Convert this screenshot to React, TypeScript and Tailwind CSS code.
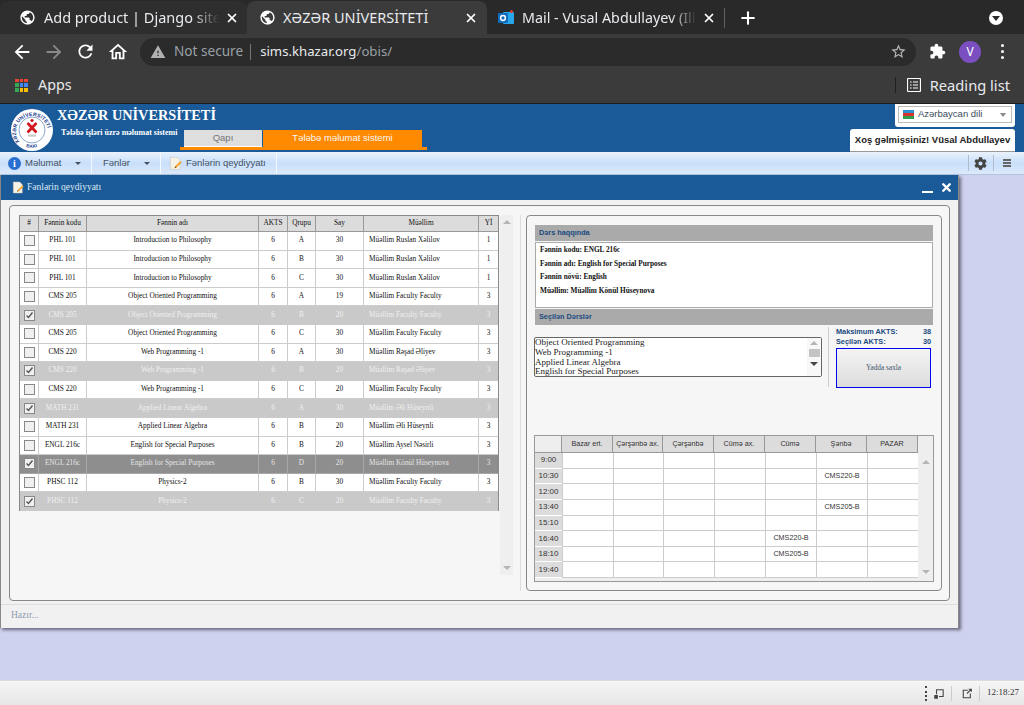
import { FaCog } from "react-icons/fa";
import { X, Plus } from "lucide-react";

const sans = "font-['Liberation_Sans',Arial,sans-serif]";
const serif = "font-['Liberation_Serif','Times_New_Roman',serif]";

type Course = [string, string, string, string, string, string, string, number];

const courses: Course[] = [
  ["PHL 101", "Introduction to Philosophy", "6", "A", "30", "Müəllim Ruslan Xəlilov", "1", 0],
  ["PHL 101", "Introduction to Philosophy", "6", "B", "30", "Müəllim Ruslan Xəlilov", "1", 0],
  ["PHL 101", "Introduction to Philosophy", "6", "C", "30", "Müəllim Ruslan Xəlilov", "1", 0],
  ["CMS 205", "Object Oriented Programming", "6", "A", "19", "Müəllim Faculty Faculty", "3", 0],
  ["CMS 205", "Object Oriented Programming", "6", "B", "20", "Müəllim Faculty Faculty", "3", 1],
  ["CMS 205", "Object Oriented Programming", "6", "C", "30", "Müəllim Faculty Faculty", "3", 0],
  ["CMS 220", "Web Programming -1", "6", "A", "30", "Müəllim Rəşad Əliyev", "3", 0],
  ["CMS 220", "Web Programming -1", "6", "B", "20", "Müəllim Rəşad Əliyev", "3", 1],
  ["CMS 220", "Web Programming -1", "6", "C", "20", "Müəllim Faculty Faculty", "3", 0],
  ["MATH 231", "Applied Linear Algebra", "6", "A", "30", "Müəllim Əli Hüseynli", "3", 1],
  ["MATH 231", "Applied Linear Algebra", "6", "B", "20", "Müəllim Əli Hüseynli", "3", 0],
  ["ENGL 216c", "English for Special Purposes", "6", "B", "20", "Müəllim Aysel Nəsirli", "3", 0],
  ["ENGL 216c", "English for Special Purposes", "6", "D", "20", "Müəllim Könül Hüseynova", "3", 2],
  ["PHSC 112", "Physics-2", "6", "B", "30", "Müəllim Faculty Faculty", "3", 0],
  ["PHSC 112", "Physics-2", "6", "C", "20", "Müəllim Faculty Faculty", "3", 1],
];

const days = ["Bazar ert.", "Çərşənbə ax.", "Çərşənbə", "Cümə ax.", "Cümə", "Şənbə", "PAZAR"];

const schedule: [string, Record<number, string>][] = [
  ["9:00", {}],
  ["10:30", { 5: "CMS220-B" }],
  ["12:00", {}],
  ["13:40", { 5: "CMS205-B" }],
  ["15:10", {}],
  ["16:40", { 4: "CMS220-B" }],
  ["18:10", { 4: "CMS205-B" }],
  ["19:40", {}],
];

const courseCols = "grid grid-cols-[19px_48px_172px_29px_28px_48px_115px_19px]";
const dayCols = "grid grid-cols-[27px_51px_50px_51px_51px_51px_51px_51px]";

function Md({ d, className }: { d: string; className: string }) {
  return (
    <svg viewBox="0 0 24 24" fill="currentColor" className={className}>
      <path d={d} />
    </svg>
  );
}

const globe =
  "M12 2C6.48 2 2 6.48 2 12s4.48 10 10 10 10-4.48 10-10S17.52 2 12 2zm-1 17.93c-3.95-.49-7-3.85-7-7.93 0-.62.08-1.21.21-1.79L9 15v1c0 1.1.9 2 2 2v1.93zm6.9-2.54c-.26-.81-1-1.39-1.9-1.39h-1v-3c0-.55-.45-1-1-1H8v-2h2c.55 0 1-.45 1-1V7h2c1.1 0 2-.9 2-2v-.41c2.93 1.19 5 4.06 5 7.41 0 2.08-.8 3.97-2.1 5.39z";

function Outlook() {
  return (
    <svg viewBox="0 0 16 16" className="w-4 h-4 shrink-0">
      <rect x="5" y="2" width="11" height="12" rx="1" fill="#28a8ea" />
      <rect x="0" y="3" width="10" height="10" rx="1" fill="#0f6cbd" />
      <circle cx="5" cy="8" r="2.4" fill="none" stroke="#fff" strokeWidth="1.5" />
      <circle cx="13.5" cy="1.5" r="1.5" fill="#e53935" />
    </svg>
  );
}

function AppsIcon() {
  const colors = [
    "bg-[#ea4335]", "bg-[#ea4335]", "bg-[#ea4335]",
    "bg-[#34a853]", "bg-[#4285f4]", "bg-[#4285f4]",
    "bg-[#34a853]", "bg-[#fbbc04]", "bg-[#fbbc04]",
  ];
  return (
    <div className="grid grid-cols-3 gap-[1px] w-[13px] h-[13px]">
      {colors.map((c, i) => (
        <div key={i} className={c} />
      ))}
    </div>
  );
}

function ChromeBar() {
  return (
    <div className="font-['Noto_Sans',sans-serif] text-[#e8eaed]">
      <div className="h-[34px] bg-[#292929] flex items-end">
        <div className="w-[247px] h-[33px] bg-[#2e2e2e] rounded-t-lg flex items-center pl-[20px] pr-[8px] shrink-0">
          <Md d={globe} className="w-[17px] h-[17px] shrink-0 text-white -ml-[1px]" />
          <span className="ml-[8px] text-[14.5px] w-[175px] whitespace-nowrap [mask-image:linear-gradient(to_right,black_85%,transparent)]">
            Add product | Django site
          </span>
          <X className="ml-auto w-[14px] h-[14px] text-white" strokeWidth={3} />
        </div>
        <div className="w-[240px] h-[33px] bg-[#3b3b3b] rounded-t-lg flex items-center pl-[12px] pr-[9px] shrink-0">
          <Md d={globe} className="w-[17px] h-[17px] shrink-0 text-white" />
          <span className="ml-[7px] text-[14.5px] whitespace-nowrap">XƏZƏR UNİVERSİTETİ</span>
          <X className="ml-auto w-[14px] h-[14px] text-white" strokeWidth={3} />
        </div>
        <div className="h-[33px] flex items-center pl-[11px] shrink-0">
          <Outlook />
          <span className="ml-[8px] text-[14.3px] w-[175px] shrink-0 whitespace-nowrap [mask-image:linear-gradient(to_right,black_85%,transparent)]">
            Mail - Vusal Abdullayev (Ill
          </span>
          <X className="ml-[5px] w-[14px] h-[14px] text-white shrink-0" strokeWidth={3} />
          <div className="ml-[8px] w-px h-[20px] bg-[#5f6368] shrink-0" />
          <Plus className="ml-[13px] w-[20px] h-[20px] text-white shrink-0" strokeWidth={2.5} />
        </div>
        <div className="flex-1 min-w-0 h-[33px] flex items-center justify-end pr-[21px]">
          <div className="w-[14px] h-[14px] rounded-full bg-white flex items-center justify-center">
            <div className="w-0 h-0 border-x-[4px] border-x-transparent border-t-[5px] border-t-[#292929] mt-[2px]" />
          </div>
        </div>
      </div>
      <div className="h-[35px] bg-[#3b3b3b] flex items-center">
        <Md d="M20 11H7.83l5.59-5.59L12 4l-8 8 8 8 1.41-1.41L7.83 13H20v-2z" className="ml-[11px] w-[22px] h-[22px] text-white" />
        <Md d="M12 4l-1.41 1.41L16.17 11H4v2h12.17l-5.58 5.59L12 20l8-8z" className="ml-[10px] w-[22px] h-[22px] text-[#8a8a8a]" />
        <Md d="M17.65 6.35C16.2 4.9 14.21 4 12 4c-4.42 0-7.99 3.58-7.99 8s3.57 8 7.99 8c3.73 0 6.84-2.55 7.73-6h-2.08c-.82 2.33-3.04 4-5.65 4-3.31 0-6-2.69-6-6s2.69-6 6-6c1.66 0 3.14.69 4.22 1.78L13 11h7V4l-2.35 2.35z" className="ml-[10px] w-[21px] h-[21px] text-white" />
        <Md d="M12 5.69l5 4.5V18h-2v-6H9v6H7v-7.81l5-4.5M12 3L2 12h3v8h6v-6h2v6h6v-8h3L12 3z" className="ml-[11px] w-[22px] h-[22px] text-white" />
        <div className="ml-[11px] w-[776px] h-[28px] rounded-full bg-[#2b2b2b] flex items-center pl-[10px]">
          <Md d="M1 21h22L12 2 1 21zm12-3h-2v-2h2v2zm0-4h-2v-4h2v4z" className="w-[16px] h-[16px] text-[#b0b0b0]" />
          <span className="ml-[8px] text-[13.6px] text-[#9aa0a6]">Not secure</span>
          <div className="ml-[7px] w-px h-[16px] bg-[#70757a]" />
          <span className="ml-[9px] text-[13.2px] text-[#e8eaed]">
            sims.khazar.org<span className="text-[#9aa0a6]">/obis/</span>
          </span>
          <Md d="M22 9.24l-7.19-.62L12 2 9.19 8.63 2 9.24l5.46 4.73L5.82 21 12 17.27 18.18 21l-1.63-7.03L22 9.24zM12 15.4l-3.76 2.27 1-4.28-3.32-2.88 4.38-.38L12 6.1l1.71 4.04 4.38.38-3.32 2.88 1 4.28L12 15.4z" className="ml-auto mr-[9px] w-[17px] h-[17px] text-[#b8b8b8]" />
        </div>
        <Md d="M20.5 11H19V7c0-1.1-.9-2-2-2h-4V3.5C13 2.12 11.88 1 10.5 1S8 2.12 8 3.5V5H4c-1.1 0-1.99.9-1.99 2v3.8H3.5c1.49 0 2.7 1.21 2.7 2.7s-1.21 2.7-2.7 2.7H2V20c0 1.1.9 2 2 2h3.8v-1.5c0-1.49 1.21-2.7 2.7-2.7 1.49 0 2.7 1.21 2.7 2.7V22H17c1.1 0 2-.9 2-2v-4h1.5c1.38 0 2.5-1.12 2.5-2.5S21.88 11 20.5 11z" className="ml-[13px] w-[17px] h-[17px] text-white" />
        <div className="ml-[13px] w-[22px] h-[22px] rounded-full bg-[#7b4fbf] flex items-center justify-center text-[12px] text-white">V</div>
        <div className="ml-[20px] flex flex-col gap-[3px]">
          <div className="w-[3px] h-[3px] rounded-full bg-white" />
          <div className="w-[3px] h-[3px] rounded-full bg-white" />
          <div className="w-[3px] h-[3px] rounded-full bg-white" />
        </div>
      </div>
      <div className="h-[35px] bg-[#3b3b3b] flex items-center pb-[2px] border-b border-[#1e1e1e]">
        <div className="ml-[15px]">
          <AppsIcon />
        </div>
        <span className="ml-[10px] text-[14.3px]">Apps</span>
        <div className="ml-auto w-px h-[16px] bg-[#1f1f1f]" />
        <svg viewBox="0 0 14 14" className="ml-[11px] w-[14px] h-[14px] text-white" fill="none" stroke="currentColor">
          <rect x="0.5" y="0.5" width="13" height="13" rx="1" strokeWidth="1.2" />
          <path d="M3 4h1.6M3 7h1.6M3 10h1.6M6 4h5M6 7h5M6 10h5" strokeWidth="1.2" />
        </svg>
        <span className="ml-[9px] mr-[14px] text-[14.7px]">Reading list</span>
      </div>
    </div>
  );
}

function Logo() {
  return (
    <svg viewBox="0 0 42 42" className="w-[42px] h-[42px] shrink-0 ml-[11px] mt-[5px]">
      <circle cx="21" cy="21" r="21" fill="#fff" />
      <circle cx="21" cy="21" r="13" fill="none" stroke="#1a4fa0" strokeWidth="0.5" />
      <defs>
        <path id="logoRing" d="M8.5 33 A16 16 0 1 1 33.5 33" />
        <path id="logoBottom" d="M12 36.5 A19 19 0 0 0 30 36.5" />
      </defs>
      <text fontSize="5.2" fontWeight="700" fill="#1a3f90" fontFamily="Liberation Sans, sans-serif" letterSpacing="0.1">
        <textPath href="#logoRing">XƏZƏR UNİVERSİTETİ</textPath>
      </text>
      <text fontSize="4.6" fontWeight="700" fill="#1a3f90" fontFamily="Liberation Sans, sans-serif">
        <textPath href="#logoBottom" startOffset="18%">BAKI</textPath>
      </text>
      <circle cx="21" cy="11.5" r="1.6" fill="#d0121b" />
      <path d="M16.5 14l9 9.5M25.5 14l-9 9.5" stroke="#d0121b" strokeWidth="2.6" />
      <rect x="17" y="25.5" width="8" height="2.2" fill="#c9c9c9" />
    </svg>
  );
}

function Header() {
  return (
    <div className="h-[48px] bg-[#1a5a99] flex">
      <Logo />
      <div className="ml-[4px] w-[123px] shrink-0">
        <div className={`${serif} mt-[2px] text-white font-bold text-[14.3px] leading-[18px] whitespace-nowrap`}>XƏZƏR UNİVERSİTETİ</div>
        <div className={`${serif} ml-[4px] mt-[3px] text-white font-bold text-[8px] leading-[11px] whitespace-nowrap`}>Tələbə işləri üzrə məlumat sistemi</div>
      </div>
      <div className="flex flex-col mt-[26px] w-[247px]">
        <div className={`${sans} flex ml-[4px] text-[9.5px] h-[17px]`}>
          <div className="w-[78px] bg-[#dedede] border-b border-white text-[#777] flex items-center justify-center">Qapı</div>
          <div className="ml-[1px] w-[159px] bg-[#ff8a00] text-[#f7f7f7] flex items-center justify-center">Tələbə məlumat sistemi</div>
        </div>
        <div className="h-[3px] bg-[#ff8a00]" />
      </div>
      <div className="ml-auto mr-[9px] flex flex-col items-end">
        <div className="w-[120px] h-[23px] bg-white rounded-b-[3px] p-[3px] pt-[2px]">
          <div className={`${sans} h-[17px] border border-[#bbb] flex items-center pl-[4px] text-[9.5px] text-[#3a4a5a]`}>
            <div className="w-[11px] h-[9px] flex flex-col mr-[4px]">
              <div className="flex-1 bg-[#2f8fd0]" />
              <div className="flex-1 bg-[#d9342b]" />
              <div className="flex-1 bg-[#2f9e4f]" />
            </div>
            Azərbaycan dili
            <div className="ml-auto mr-[5px] w-0 h-0 border-x-[3px] border-x-transparent border-t-[4px] border-t-[#888]" />
          </div>
        </div>
        <div className={`${sans} mt-[2px] w-[165px] h-[23px] bg-white rounded-t-[3px] border-b border-[#999] flex items-center justify-center font-bold text-[9.5px] text-[#222] whitespace-nowrap`}>
          Xoş gəlmişsiniz! Vüsal Abdullayev
        </div>
      </div>
    </div>
  );
}

function NoteIcon({ className }: { className: string }) {
  return (
    <svg viewBox="0 0 14 14" className={className}>
      <path d="M1.5 0.5h7.5l3 3v10H1.5z" fill="#f6f2e8" stroke="#c4bdac" strokeWidth="0.5" />
      <path d="M6 12l.8-2.2 5.4-5.4 1.4 1.4-5.4 5.4z" fill="#f2a52c" />
      <path d="M6 12l.8-2.2 1.4 1.4z" fill="#7a5a20" />
    </svg>
  );
}

function MenuBar() {
  return (
    <div className={`${sans} h-[23px] bg-gradient-to-b from-[#eaf2fd] via-[#c8dffa] to-[#dce9fb] flex text-[9.5px] text-[#44515f] border-b border-[#b4c6dd]`}>
      <div className="w-[92px] flex items-center border-r border-[#f4f8ff] pl-[8px]">
        <div className="w-[13px] h-[13px] rounded-full bg-[#2a6fd0] text-white font-bold text-[10px] flex items-center justify-center font-['Liberation_Serif',serif]">i</div>
        <span className="ml-[4px]">Məlumat</span>
        <div className="ml-auto mr-[10px] w-0 h-0 border-x-[3px] border-x-transparent border-t-[3px] border-t-[#44515f]" />
      </div>
      <div className="w-[69px] flex items-center border-r border-[#f4f8ff] pl-[11px]">
        <span>Fənlər</span>
        <div className="ml-auto mr-[10px] w-0 h-0 border-x-[3px] border-x-transparent border-t-[3px] border-t-[#44515f]" />
      </div>
      <div className="w-[116px] flex items-center border-r border-[#f4f8ff] pl-[8px]">
        <NoteIcon className="w-[13px] h-[13px]" />
        <span className="ml-[4px]">Fənlərin qeydiyyatı</span>
      </div>
      <div className="ml-auto flex items-center mr-[13px]">
        <div className="w-px h-[16px] bg-[#b0bccb]" />
        <FaCog className="ml-[5px] w-[13px] h-[13px] text-[#444]" />
        <div className="w-px h-[16px] ml-[6px] bg-[#b0bccb]" />
        <div className="ml-[9px] w-[8px] flex flex-col gap-[1px]">
          <div className="h-[2px] bg-[#666]" />
          <div className="h-[2px] bg-[#666]" />
          <div className="h-[2px] bg-[#666]" />
        </div>
      </div>
    </div>
  );
}

function Checkbox({ on }: { on: boolean }) {
  return (
    <div className="w-[11px] h-[11px] bg-[#f0f0f0] border border-[#888] flex items-center justify-center">
      {on && (
        <svg viewBox="0 0 9 9" className="w-[9px] h-[9px]">
          <path d="M1.5 4.5l2 2 4-5" fill="none" stroke="#555" strokeWidth="1.4" />
        </svg>
      )}
    </div>
  );
}

function ScrollArrow({ up }: { up: boolean }) {
  return up ? (
    <div className="w-0 h-0 border-x-[4px] border-x-transparent border-b-[4px] border-b-[#b5b5b5]" />
  ) : (
    <div className="w-0 h-0 border-x-[4px] border-x-transparent border-t-[4px] border-t-[#b5b5b5]" />
  );
}

function CourseTable() {
  const heads = ["#", "Fənnin kodu", "Fənnin adı", "AKTS", "Qrupu", "Say", "Müəllim", "Yİ"];
  return (
    <div className="flex">
      <div className={`${serif} w-[480px] h-[296px] border border-[#888] text-[7.3px] text-[#111] bg-white`}>
        <div className={`${courseCols} h-[16px] bg-[#dcdcdc] border-b border-[#999]`}>
          {heads.map((h) => (
            <div key={h} className="flex items-center justify-center border-r border-[#999] last:border-r-0">{h}</div>
          ))}
        </div>
        {courses.map((c, i) => {
          const state = c[7];
          const rowClass = state === 1 ? "bg-[#c9c9c9] text-[#f0f0f0]" : state === 2 ? "bg-[#8e8e8e] text-[#e4e4e4]" : "";
          const line = state === 0 ? "border-[#ccc]" : "border-[#ccc]/40";
          const cell = `flex items-center justify-center border-r border-b ${line}`;
          return (
            <div key={i} className={`${courseCols} h-[18.6px] ${rowClass}`}>
              <div className={cell}><Checkbox on={state !== 0} /></div>
              <div className={cell}>{c[0]}</div>
              <div className={cell}>{c[1]}</div>
              <div className={cell}>{c[2]}</div>
              <div className={cell}>{c[3]}</div>
              <div className={cell}>{c[4]}</div>
              <div className={`${cell} justify-start pl-[5px] whitespace-nowrap`}>{c[5]}</div>
              <div className={`flex items-center justify-center border-b ${line}`}>{c[6]}</div>
            </div>
          );
        })}
      </div>
      <div className="ml-[1px] w-[13px] h-[360px] bg-[#efefef] flex flex-col items-center justify-between py-[5px]">
        <ScrollArrow up />
        <ScrollArrow up={false} />
      </div>
    </div>
  );
}

function SectionBar({ title }: { title: string }) {
  return (
    <div className={`${sans} h-[16px] bg-[#aaaaaa] flex items-center pl-[4px] text-[7.3px] font-bold text-[#1a4a80]`}>{title}</div>
  );
}

function Schedule() {
  return (
    <div className={`${sans} mt-[47px] -ml-[1px] w-[400px] h-[147px] border border-[#999] bg-[#eeeeee] text-[7.2px] text-[#333] flex`}>
      <div className="w-[383px]">
        <div className={`${dayCols} h-[17px] border-b border-[#999]`}>
          <div className="bg-[#eeeeee] border-r border-[#999]" />
          {days.map((d) => (
            <div key={d} className="bg-[#dcdcdc] border-r border-[#999] flex items-center justify-center whitespace-nowrap">{d}</div>
          ))}
        </div>
        {schedule.map(([time, cells]) => (
          <div key={time} className={`${dayCols} h-[15.65px]`}>
            <div className="bg-[#dcdcdc] border-b border-white flex items-center justify-center text-[8px]">{time}</div>
            {days.map((_, i) => (
              <div key={i} className="bg-white border-l border-b border-[#ccc] flex items-center justify-center">{cells[i]}</div>
            ))}
          </div>
        ))}
      </div>
      <div className="flex-1 flex flex-col items-center justify-between pt-[24px] pb-[7px]">
        <ScrollArrow up />
        <ScrollArrow up={false} />
      </div>
    </div>
  );
}

function RightPanel() {
  return (
    <div className="w-[416px] h-[376px] border border-[#888] rounded-[4px] px-[8px] pt-[9px]">
      <SectionBar title="Dərs haqqında" />
      <div className={`${serif} mt-[1px] h-[66px] bg-white border border-[#aaa] pl-[4px] text-[7.3px] font-bold text-[#111] leading-[13.6px]`}>
        <div>Fənnin kodu: ENGL 216c</div>
        <div>Fənnin adı: English for Special Purposes</div>
        <div>Fənnin növü: English</div>
        <div>Müəllim: Müəllim Könül Hüseynova</div>
      </div>
      <div className="mt-[1px]">
        <SectionBar title="Seçilən Dərslər" />
      </div>
      <div className="flex mt-[2px]">
        <div className={`${serif} -ml-[1px] mt-[10px] w-[288px] h-[40px] border border-[#666] rounded-[2px] bg-white flex text-[9px] leading-[9.8px] text-[#222]`}>
          <div className="flex-1 whitespace-nowrap">
            <div>Object Oriented Programming</div>
            <div>Web Programming -1</div>
            <div>Applied Linear Algebra</div>
            <div>English for Special Purposes</div>
          </div>
          <div className="w-[14px] flex flex-col items-center pt-[3px] bg-[#f8f8f8]">
            <ScrollArrow up />
            <div className="mt-[4px] w-[11px] h-[8px] bg-[#c4c4c4]" />
            <div className="mt-[5px] w-0 h-0 border-x-[4px] border-x-transparent border-t-[4px] border-t-[#444]" />
          </div>
        </div>
        <div className="ml-[6px] w-px h-[60px] bg-[#ccc]" />
        <div className={`${sans} ml-[7px] w-[95px] text-[7.3px] font-bold text-[#1a4a80]`}>
          <div className="h-[10px] flex items-center justify-between">
            <span>Maksimum AKTS:</span>
            <span>38</span>
          </div>
          <div className="h-[10px] flex items-center justify-between">
            <span>Seçilən AKTS:</span>
            <span>30</span>
          </div>
          <div className={`${serif} w-[95px] h-[40px] mt-[1px] border border-[#0000ee] bg-gradient-to-b from-[#f4f4f4] to-[#dcdcdc] flex items-center justify-center font-normal text-[7.3px] text-[#44546a]`}>
            Yadda saxla
          </div>
        </div>
      </div>
      <Schedule />
    </div>
  );
}

function AppWindow() {
  return (
    <div className="w-[959px] h-[453px] bg-[#f1f1f1] border-x border-[#888] shadow-[2px_2px_3px_rgba(60,60,80,0.7)] flex flex-col">
      <div className={`${serif} h-[25px] shrink-0 bg-[#1a5a99] flex items-center pl-[11px] text-[9.5px] text-[#dfe8f2]`}>
        <NoteIcon className="w-[12px] h-[13px]" />
        <span className="ml-[3px]">Fənlərin qeydiyyatı</span>
        <div className="ml-auto mr-[7px] w-[11px] h-[2px] mt-[9px] bg-white" />
        <X className="mr-[5px] w-[13px] h-[13px] text-white" strokeWidth={4.5} />
      </div>
      <div className="mx-[8px] mt-[5px] h-[396px] border border-[#888] rounded-[4px] bg-[#f6f6f6] flex pl-[9px] pt-[9px]">
        <CourseTable />
        <div className="ml-[7px] w-px h-[376px] bg-[#ddd]" />
        <div className="ml-[5px]">
          <RightPanel />
        </div>
      </div>
      <div className="mt-[3px] flex-1 border-t border-[#ddd] flex items-center pl-[10px] pb-[2px]">
        <span className={`${serif} text-[9.5px] text-[#8e9db0]`}>Hazır...</span>
      </div>
    </div>
  );
}

function TaskBar() {
  return (
    <div className="h-[25px] shrink-0 bg-gradient-to-b from-[#f6f6f6] to-[#e6e6e6] border-t border-[#ddd] flex items-center justify-end pr-[6px]">
      <div className="w-[2px] h-[15px] border-l-2 border-dotted border-[#444]" />
      <svg viewBox="0 0 12 12" className="ml-[7px] w-[10px] h-[11px]" fill="none" stroke="#444" strokeWidth="1.3">
        <path d="M3 7V1.5h8v8H6" />
        <path d="M1 8.5h3v3H1z" fill="#444" />
      </svg>
      <div className="ml-[7px] w-px h-[15px] bg-[#ccc]" />
      <svg viewBox="0 0 12 12" className="ml-[10px] w-[10px] h-[11px]" fill="none" stroke="#444" strokeWidth="1.3">
        <path d="M7 2H1.5v9h8.5V6" />
        <path d="M6 6l5-5M8 .8h3.2V4" />
      </svg>
      <div className="ml-[7px] w-px h-[15px] bg-[#ccc]" />
      <span className={`${serif} ml-[7px] w-[31px] whitespace-nowrap text-[9px] text-[#333]`}>12:18:27</span>
    </div>
  );
}

export default function App() {
  return (
    <div className="w-[1024px] h-[705px] overflow-hidden flex flex-col bg-[#cfd2ee]">
      <ChromeBar />
      <Header />
      <MenuBar />
      <div className="flex-1">
        <AppWindow />
      </div>
      <TaskBar />
    </div>
  );
}
